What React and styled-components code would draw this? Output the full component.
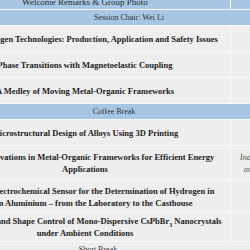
import React, { useLayoutEffect, useRef } from 'react';
import styled, { createGlobalStyle } from 'styled-components';

const GlobalStyle = createGlobalStyle`
  html, body {
    margin: 0;
    padding: 0;
    background: #ffffff;
  }
  body {
    font-family: "Liberation Serif", "Times New Roman", serif;
  }
`;

const BLUE = '#a7c6e6';
const GREY = '#eeeeee';

const Viewport = styled.div`
  width: 250px;
  height: 250px;
  overflow: hidden;
`;

const Table = styled.table`
  border-collapse: separate;
  border-spacing: 1px;
  background: #f9f9f9;
  table-layout: fixed;
  width: 554px;
`;

const Col = styled.col`
  width: ${({ $w }) => $w}px;
`;

const Cell = styled.td`
  padding: 5px 5px;
  color: #222;
  text-align: center;
  vertical-align: middle;
  background: ${({ $tone }) => ($tone === 'blue' ? BLUE : GREY)};
`;

const TimeCell = styled(Cell)`
  font-size: 8.5px;
  line-height: 12px;
`;

const TitleCell = styled(Cell)`
  height: 21px;
  padding: ${({ $pad = 2 }) => $pad}px 5px;
  font-size: 8.5px;
  font-weight: bold;
  line-height: 12px;

  sub {
    font-size: 6px;
    line-height: 0;
  }
`;

const SpeakerCell = styled(Cell)`
  padding: 5px 8px;
  font-size: 8.5px;
  line-height: 12px;
  font-style: italic;
  color: #555;
`;

/* rows for breaks, chairs and announcements: one thin line of plain text.
   $shift > 0 nudges the label left, < 0 nudges it right */
const NoteCell = styled(Cell)`
  padding: ${({ $pad = 2 }) => $pad}px ${({ $shift = 0 }) => 5 + Math.max($shift, 0)}px
    ${({ $pad = 2 }) => $pad}px ${({ $shift = 0 }) => 5 + Math.max(-$shift, 0)}px;
  font-size: 8px;
  line-height: 11px;
  color: #333;
`;

const PlenaryCell = styled(NoteCell)`
  font-size: 9px;
  color: #2a2a2a;
`;

const HeadCell = styled(Cell)`
  font-size: 9px;
  font-weight: bold;
  color: #fff;
  background: #5b87b8;
`;

const talks = [
  { time: '09:30 – 10:00', title: 'Green Hydrogen Technologies: Production, Application and Safety Issues' },
  { time: '10:00 – 10:30', title: 'Phase Transitions with Magnetoelastic Coupling' },
  { time: '10:30 – 11:00', title: 'A Medley of Moving Metal-Organic Frameworks' },
];

const talksAfter = [
  { time: '11:30 – 12:00', title: 'Microstructural Design of Alloys Using 3D Printing' },
  {
    time: '12:00 – 12:30',
    title: 'Recent Innovations in Metal-Organic Frameworks for Efficient Energy Applications',
    speaker: 'Indian Institute of Science Education Bhopal and Research Centre for Energy Materials',
  },
  {
    time: '12:30 – 13:00',
    pad: 3.5,
    title:
      'A Robust Electrochemical Sensor for the Determination of Hydrogen in Molten Aluminium – from the Laboratory to the Casthouse',
  },
  {
    time: '13:00 – 13:30',
    title: (
      <>
        Tunable Size and Shape Control of Mono-Dispersive CsPbBr<sub>3</sub> Nanocrystals
        under Ambient Conditions
      </>
    ),
  },
];

function TalkRow({ time, title, speaker, pad }) {
  return (
    <tr>
      <TimeCell>{time}</TimeCell>
      <TitleCell $pad={pad}>{title}</TitleCell>
      <SpeakerCell>{speaker}</SpeakerCell>
    </tr>
  );
}

export default function App() {
  const viewRef = useRef(null);
  const anchorRef = useRef(null);

  useLayoutEffect(() => {
    const view = viewRef.current;
    const anchor = anchorRef.current;
    const v = view.getBoundingClientRect();
    const a = anchor.getBoundingClientRect();
    view.scrollLeft = a.left - v.left + 60;
    view.scrollTop = a.bottom - v.top - 9;
  }, []);

  return (
    <>
      <GlobalStyle />
      <Viewport ref={viewRef}>
        <Table>
          <colgroup>
            <Col $w={90} />
            <Col $w={290} />
            <Col $w={170} />
          </colgroup>
          <tbody>
            <tr>
              <HeadCell>Time</HeadCell>
              <HeadCell>Title</HeadCell>
              <HeadCell>Speaker</HeadCell>
            </tr>
            <tr>
              <PlenaryCell $tone="blue" $pad={1}>
                09:00 – 09:30
              </PlenaryCell>
              <PlenaryCell $tone="blue" $pad={1} ref={anchorRef}>
                Welcome Remarks &amp; Group Photo
              </PlenaryCell>
              <PlenaryCell $tone="blue" $pad={1} />
            </tr>
            <tr>
              <NoteCell $tone="blue" colSpan={3} $shift={-8}>
                Session Chair: Wei Li
              </NoteCell>
            </tr>
            {talks.map((t) => (
              <TalkRow key={t.time} {...t} />
            ))}
            <tr>
              <NoteCell $tone="blue" colSpan={3} $shift={22}>
                Coffee Break
              </NoteCell>
            </tr>
            {talksAfter.map((t) => (
              <TalkRow key={t.time} {...t} />
            ))}
            <tr>
              <NoteCell colSpan={3} $shift={54}>
                Short Break
              </NoteCell>
            </tr>
          </tbody>
        </Table>
      </Viewport>
    </>
  );
}
